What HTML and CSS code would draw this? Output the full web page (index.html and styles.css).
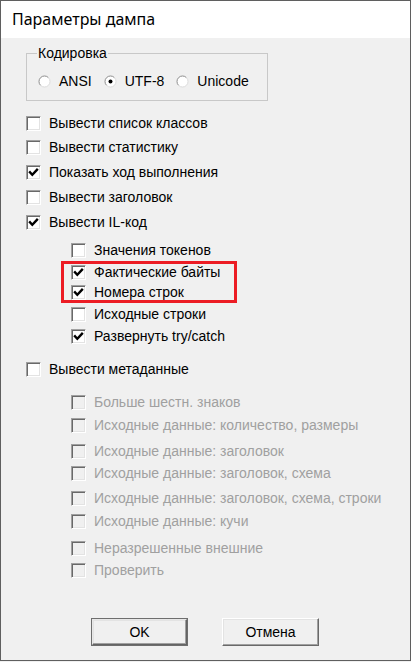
FILE: index.html
```html
<!DOCTYPE html>
<html lang="ru">
<head>
<meta charset="utf-8">
<title>Параметры дампа</title>
<link rel="stylesheet" href="styles.css">
</head>
<body>
<div class="window">
  <div class="titlebar">Параметры дампа</div>
  <div class="content">
    <fieldset class="group">
      <legend>Кодировка</legend>
      <div class="radios">
        <label class="radio"><svg class="rb" width="13" height="13" viewBox="0 0 13 13"><circle cx="6.5" cy="6.5" r="5.5" fill="#fff"/><path d="M2.6 10.4 A5.5 5.5 0 0 1 10.4 2.6" fill="none" stroke="#8c8c8c"/><path d="M10.4 2.6 A5.5 5.5 0 0 1 2.6 10.4" fill="none" stroke="#dcdcdc"/></svg><span>ANSI</span></label>
        <label class="radio"><svg class="rb" width="13" height="13" viewBox="0 0 13 13"><circle cx="6.5" cy="6.5" r="5.5" fill="#fff"/><path d="M2.6 10.4 A5.5 5.5 0 0 1 10.4 2.6" fill="none" stroke="#8c8c8c"/><path d="M10.4 2.6 A5.5 5.5 0 0 1 2.6 10.4" fill="none" stroke="#dcdcdc"/><circle cx="6.5" cy="6.5" r="2" fill="#000"/></svg><span>UTF-8</span></label>
        <label class="radio"><svg class="rb" width="13" height="13" viewBox="0 0 13 13"><circle cx="6.5" cy="6.5" r="5.5" fill="#fff"/><path d="M2.6 10.4 A5.5 5.5 0 0 1 10.4 2.6" fill="none" stroke="#8c8c8c"/><path d="M10.4 2.6 A5.5 5.5 0 0 1 2.6 10.4" fill="none" stroke="#dcdcdc"/></svg><span>Unicode</span></label>
      </div>
    </fieldset>

    <div class="rows">
      <div class="row m14"><span class="cb"></span><span class="lbl">Вывести список классов</span></div>
      <div class="row m8"><span class="cb"></span><span class="lbl">Вывести статистику</span></div>
      <div class="row m9"><span class="cb"><svg class="tick" viewBox="0 0 13 13"><path d="M3 6.3 L5.3 8.8 L10 3.8"/></svg></span><span class="lbl">Показать ход выполнения</span></div>
      <div class="row m9"><span class="cb"></span><span class="lbl">Вывести заголовок</span></div>
      <div class="row m9"><span class="cb"><svg class="tick" viewBox="0 0 13 13"><path d="M3 6.3 L5.3 8.8 L10 3.8"/></svg></span><span class="lbl">Вывести IL-код</span></div>

      <div class="sub">
        <div class="row m12"><span class="cb"></span><span class="lbl">Значения токенов</span></div>
        <div class="highlight">
          <div class="row"><span class="cb"><svg class="tick" viewBox="0 0 13 13"><path d="M3 6.3 L5.3 8.8 L10 3.8"/></svg></span><span class="lbl">Фактические байты</span></div>
          <div class="row m4"><span class="cb"><svg class="tick" viewBox="0 0 13 13"><path d="M3 6.3 L5.3 8.8 L10 3.8"/></svg></span><span class="lbl">Номера строк</span></div>
        </div>
        <div class="row"><span class="cb"></span><span class="lbl">Исходные строки</span></div>
        <div class="row m6"><span class="cb"><svg class="tick" viewBox="0 0 13 13"><path d="M3 6.3 L5.3 8.8 L10 3.8"/></svg></span><span class="lbl">Развернуть try/catch</span></div>
      </div>

      <div class="row m17"><span class="cb"></span><span class="lbl">Вывести метаданные</span></div>

      <div class="sub disabled">
        <div class="row m17"><span class="cb"></span><span class="lbl">Больше шестн. знаков</span></div>
        <div class="row m7"><span class="cb"></span><span class="lbl">Исходные данные: количество, размеры</span></div>
        <div class="row m10"><span class="cb"></span><span class="lbl">Исходные данные: заголовок</span></div>
        <div class="row m6"><span class="cb"></span><span class="lbl">Исходные данные: заголовок, схема</span></div>
        <div class="row m9"><span class="cb"></span><span class="lbl">Исходные данные: заголовок, схема, строки</span></div>
        <div class="row m7"><span class="cb"></span><span class="lbl">Исходные данные: кучи</span></div>
        <div class="row m11"><span class="cb"></span><span class="lbl">Неразрешенные внешние</span></div>
        <div class="row m6"><span class="cb"></span><span class="lbl">Проверить</span></div>
      </div>
    </div>

    <div class="buttons">
      <button class="btn default">OK</button>
      <button class="btn">Отмена</button>
    </div>
  </div>
</div>
</body>
</html>
```

FILE: styles.css
```css
* { box-sizing: border-box; }
html, body { margin: 0; padding: 0; background: #f0f0f0; }
body { width: 411px; height: 662px; overflow: hidden; }

.window {
  width: 411px;
  height: 661px;
  border: 1px solid #5f5f5f;
  background: #f0f0f0;
  font-family: "Liberation Sans", Arial, sans-serif;
  font-size: 14px;
  color: #000;
  display: flex;
  flex-direction: column;
}

.titlebar {
  height: 37px;
  background: #fff;
  padding-left: 11px;
  font-family: "Noto Sans", "Open Sans", sans-serif;
  font-size: 16px;
  line-height: 37px;
  color: #000;
}

.content {
  flex: 1;
  padding: 7px 0 0 25px;
}

.group {
  margin: 0;
  width: 242px;
  height: 56px;
  border: 1px solid #c8c8c8;
  padding: 0 0 0 10px;
}
.group legend {
  padding: 0 1px;
  line-height: 16px;
  height: 16px;
}

.radios {
  display: flex;
  align-items: center;
  margin-top: 13px;
  padding-left: 1px;
  height: 14px;
  white-space: nowrap;
}
.radio {
  display: flex;
  flex: none;
  align-items: center;
  gap: 8px;
  margin-right: 12px;
  line-height: 16px;
  white-space: nowrap;
}
.radio:last-child { margin-right: 0; }
.rb { display: block; flex: none; }

.rows { display: flex; flex-direction: column; }

.row {
  display: flex;
  align-items: center;
  gap: 8px;
  height: 16px;
  line-height: 16px;
  white-space: nowrap;
}
.m4 { margin-top: 4px; }
.m6 { margin-top: 6px; }
.m7 { margin-top: 7px; }
.m8 { margin-top: 8px; }
.m9 { margin-top: 9px; }
.m10 { margin-top: 10px; }
.m11 { margin-top: 11px; }
.m12 { margin-top: 12px; }
.m14 { margin-top: 14px; }
.m17 { margin-top: 17px; }

.cb {
  width: 15px;
  height: 15px;
  flex: none;
  background: #fff;
  border: 1px solid;
  border-color: #a0a0a0 #fff #fff #a0a0a0;
  box-shadow: inset 1px 1px 0 #696969, inset -1px -1px 0 #e3e3e3;
  display: flex;
  align-items: center;
  justify-content: center;
}
.tick { width: 13px; height: 13px; display: block; }
.tick path { fill: none; stroke: #000; stroke-width: 2.4; stroke-linecap: square; }

.sub { display: flex; flex-direction: column; padding-left: 45px; }

.highlight {
  margin: 3px 0 3px -10px;
  width: 176px;
  height: 42px;
  border: 3px solid #ec1c24;
  padding: 0 0 0 7px;
  display: flex;
  flex-direction: column;
}

.disabled .lbl { color: #a0a0a0; }
.disabled .cb { background: #f0f0f0; }

.buttons {
  display: flex;
  gap: 34px;
  margin-top: 40px;
  padding-left: 65px;
}
.btn {
  width: 97px;
  height: 28px;
  font-family: "Liberation Sans", Arial, sans-serif;
  font-size: 14px;
  color: #000;
  background: #f0f0f0;
  border: 1px solid;
  border-color: #fff #696969 #696969 #fff;
  box-shadow: inset -1px -1px 0 #a0a0a0, inset 1px 1px 0 #e3e3e3;
  padding: 0;
}
.btn.default {
  border: 2px solid;
  border-color: #e8e8e8 #646464 #646464 #e8e8e8;
  outline: 1px solid #6e6e6e;
  outline-offset: -1px;
}
```
